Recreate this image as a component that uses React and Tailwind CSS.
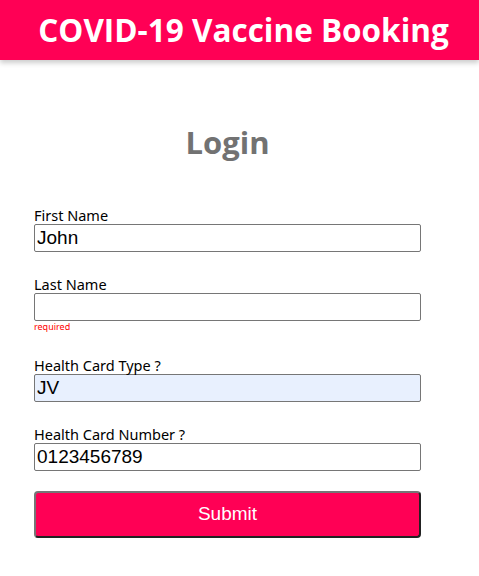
export default function App() {
  const fields = [
    { label: "First Name", value: "John" },
    { label: "Last Name", value: "", error: "required" },
    { label: "Health Card Type ?", value: "JV", filled: true },
    { label: "Health Card Number ?", value: "0123456789" },
  ];

  return (
    <div className="min-h-[576px] bg-white font-['Noto_Sans',sans-serif]">
      {/* Header */}
      <header className="h-[60px] bg-[#ff0055] shadow-[0_3px_5px_rgba(0,0,0,0.2)] flex items-center justify-center pl-[8px]">
        <h1 className="text-white font-bold text-[31.5px] leading-none font-['Open_Sans',sans-serif]">
          COVID-19 Vaccine Booking
        </h1>
      </header>

      {/* Form */}
      <div className="w-[387px] ml-[34px] pt-[64px]">
        <h2 className="text-center text-[#727272] font-bold text-[31px] leading-[36px] font-['Open_Sans',sans-serif]">
          Login
        </h2>

        <form className="mt-[46px]" onSubmit={(e) => e.preventDefault()}>
          {fields.map((f) => (
            <div key={f.label} className="mb-[23px]">
              <label className="block text-[14.5px] leading-[18px] text-black">
                {f.label}
              </label>
              <input
                defaultValue={f.value}
                className={`block w-full h-[28px] border border-[#767676] rounded-[2px] px-[2px] text-[19px] text-black font-['Liberation_Sans',sans-serif] outline-none ${
                  f.filled ? "bg-[#e8f0fe]" : "bg-white"
                }`}
              />
              {f.error && (
                <p className="text-[9px] leading-[12px] text-[#ff0000]">{f.error}</p>
              )}
            </div>
          ))}

          <button
            type="submit"
            className="-mt-[3px] w-full h-[47px] bg-[#ff0055] border-2 border-[#767676] border-b-[#222] border-r-[#222] rounded-[4px] text-white text-[19px] font-['Liberation_Sans',sans-serif]"
          >
            Submit
          </button>
        </form>
      </div>
    </div>
  );
}
